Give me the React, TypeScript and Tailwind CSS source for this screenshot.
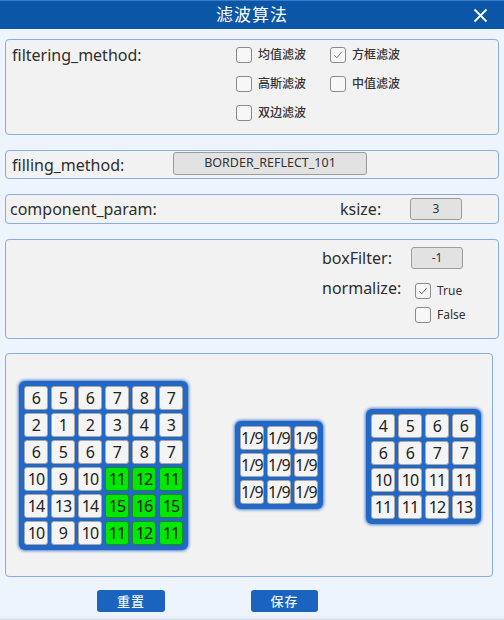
import React from "react";

const font = { fontFamily: '"Noto Sans", "Noto Sans CJK SC", sans-serif' };

function Check({ checked }: { checked?: boolean }) {
  return (
    <div className="w-[16px] h-[16px] rounded-[3px] border border-[#8a8a8a] bg-[#f7f7f7] flex items-center justify-center shrink-0">
      {checked && (
        <svg width="12" height="12" viewBox="0 0 12 12">
          <path d="M2.2 6.2 L4.8 8.8 L9.8 2.8" fill="none" stroke="#707070" strokeWidth="1" />
        </svg>
      )}
    </div>
  );
}

function CheckItem({ label, checked }: { label: string; checked?: boolean }) {
  return (
    <div className="flex items-center h-[16px]">
      <Check checked={checked} />
      <span className="ml-[6px] text-[12px] font-medium text-[#333] leading-none">{label}</span>
    </div>
  );
}

function Cell({ v, green }: { v: string; green?: boolean }) {
  return (
    <div
      className={
        "w-[24px] h-[24px] rounded-[3px] border flex items-center justify-center text-[16px] leading-none tracking-[-0.8px] " +
        (green ? "bg-[#00e800] border-[#1d8a1d] text-[#111]" : "bg-[#f4f4f4] border-[#a8a8a8] text-[#222]")
      }
    >
      {v}
    </div>
  );
}

function Matrix({ rows, cols, data, greens }: { rows: number; cols: number; data: string[]; greens?: boolean[] }) {
  return (
    <div
      className={
        "bg-[#2468c6] rounded-[6px] p-[5px] shadow-[0_0_3px_1px_rgba(36,104,198,0.8)] grid gap-[3px] " +
        (cols === 6 ? "grid-cols-6" : cols === 3 ? "grid-cols-3" : "grid-cols-4")
      }
    >
      {data.slice(0, rows * cols).map((v, i) => (
        <Cell key={i} v={v} green={greens ? greens[i] : false} />
      ))}
    </div>
  );
}

export default function App() {
  const m1 = ["6","5","6","7","8","7","2","1","2","3","4","3","6","5","6","7","8","7","10","9","10","11","12","11","14","13","14","15","16","15","10","9","10","11","12","11"];
  const g1 = m1.map((_, i) => i >= 18 && i % 6 >= 3);
  const m2 = Array(9).fill("1/9");
  const m3 = ["4","5","6","6","6","6","7","7","10","10","11","11","11","11","12","13"];

  return (
    <div style={font} className="w-[504px] h-[620px] bg-[#eef4fe] flex flex-col text-[#2e2e2e] shadow-[inset_0_-3px_3px_-2px_rgba(0,0,0,0.12)]">
      <div className="h-[29px] bg-[#0c56a7] flex items-center justify-center relative border-t border-[#3b7bc4]">
        <span className="text-white text-[17px] tracking-[1px]">滤波算法</span>
        <svg className="absolute right-[16px] top-[7px]" width="15" height="15" viewBox="0 0 15 15">
          <path d="M1.5 1.5 L13.5 13.5 M13.5 1.5 L1.5 13.5" stroke="white" strokeWidth="1.8" />
        </svg>
      </div>

      <div className="px-[5px] flex flex-col">
        {/* panel 1 */}
        <div className="mt-[10px] h-[96px] w-[494px] bg-[#f2f2f2] border border-[#86ade6] rounded-[4px] flex pt-[7px] pl-[6px]">
          <div className="w-[224px] text-[16px] leading-[16px]">filtering_method:</div>
          <div className="grid grid-cols-[94px_auto] gap-y-[13px] content-start">
            <CheckItem label="均值滤波" />
            <CheckItem label="方框滤波" checked />
            <CheckItem label="高斯滤波" />
            <CheckItem label="中值滤波" />
            <CheckItem label="双边滤波" />
          </div>
        </div>

        {/* panel 2 */}
        <div className="mt-[15px] h-[29px] w-[494px] bg-[#f2f2f2] border border-[#86ade6] rounded-[4px] flex items-center pl-[6px]">
          <div className="w-[161px] text-[16px] leading-none pt-[1px]">filling_method:</div>
          <div className="w-[194px] h-[23px] bg-[#e2e2e2] border border-[#9c9c9c] rounded-[3px] flex items-center justify-center text-[12.5px] text-[#333] -mt-[3px]">
            BORDER_REFLECT_101
          </div>
        </div>

        {/* panel 3 */}
        <div className="mt-[15px] h-[30px] w-[494px] bg-[#f2f2f2] border border-[#86ade6] rounded-[4px] flex items-center pl-[4px]">
          <div className="w-[330px] text-[16px] leading-none">component_param:</div>
          <div className="w-[70px] text-[16px] leading-none">ksize:</div>
          <div className="w-[52px] h-[22px] bg-[#e2e2e2] border border-[#9c9c9c] rounded-[3px] flex items-center justify-center text-[12px] text-[#333]">
            3
          </div>
        </div>

        {/* panel 4 */}
        <div className="mt-[15px] h-[100px] w-[494px] bg-[#f2f2f2] border border-[#86ade6] rounded-[4px] flex flex-col pl-[316px] pt-[7px]">
          <div className="flex items-center h-[22px]">
            <div className="w-[89px] text-[16px] leading-none">boxFilter:</div>
            <div className="w-[52px] h-[22px] bg-[#e2e2e2] border border-[#9c9c9c] rounded-[3px] flex items-center justify-center text-[12px] text-[#333]">
              -1
            </div>
          </div>
          <div className="flex mt-[14px]">
            <div className="w-[93px] text-[16px] leading-none -mt-[3px]">normalize:</div>
            <div className="flex flex-col gap-[8px]">
              <div className="flex items-center h-[16px]">
                <Check checked />
                <span className="ml-[6px] text-[12px] text-[#333]">True</span>
              </div>
              <div className="flex items-center h-[16px]">
                <Check />
                <span className="ml-[6px] text-[12px] text-[#333]">False</span>
              </div>
            </div>
          </div>
        </div>

        {/* panel 5 */}
        <div className="mt-[14px] h-[224px] w-[488px] bg-[#f2f2f2] border border-[#86ade6] rounded-[4px] flex items-center pl-[13px]">
          <Matrix rows={6} cols={6} data={m1} greens={g1} />
          <div className="ml-[47px]">
            <Matrix rows={3} cols={3} data={m2} />
          </div>
          <div className="ml-[43px] mt-[3px]">
            <Matrix rows={4} cols={4} data={m3} />
          </div>
        </div>

        {/* buttons */}
        <div className="mt-[13px] flex pl-[92px]">
          <button className="w-[68px] h-[22px] bg-[#1a63be] rounded-[3px] text-[#eef3fb] text-[13px] font-medium tracking-[1px] leading-none">
            重置
          </button>
          <button className="ml-[86px] w-[67px] h-[22px] bg-[#1a63be] rounded-[3px] text-[#eef3fb] text-[13px] font-medium tracking-[1px] leading-none">
            保存
          </button>
        </div>
      </div>
    </div>
  );
}
